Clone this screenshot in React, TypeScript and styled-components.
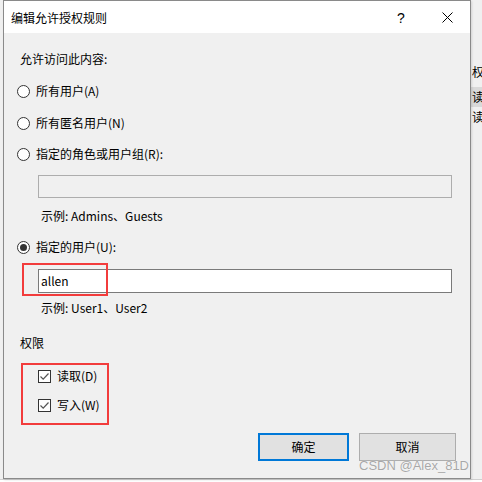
import styled, { createGlobalStyle } from "styled-components";

const GlobalStyle = createGlobalStyle`
  html, body {
    margin: 0;
    padding: 0;
    background: #f0f0f0;
  }
  * {
    box-sizing: border-box;
  }
`;

const Page = styled.div`
  position: relative;
  width: 482px;
  height: 482px;
  overflow: hidden;
  background: #f0f0f0;
  display: flex;
  flex-direction: column;
  font-family: "Noto Sans CJK SC", "Noto Sans", sans-serif;
  font-size: 12px;
  color: #000;
`;

const BehindText = styled.div<{ $top: number; $shade?: boolean }>`
  position: absolute;
  left: 471px;
  top: ${(p) => p.$top}px;
  width: 20px;
  height: 20px;
  line-height: 20px;
  padding-left: 1px;
  font-size: 12px;
  background: ${(p) => (p.$shade ? "#d9d9d9" : "transparent")};
  white-space: nowrap;
`;

const BottomStrip = styled.div`
  height: 3px;
  background: #ffffff;
  border-top: 1px solid #d0d0d0;
`;

const Dialog = styled.div`
  position: relative;
  z-index: 1;
  margin-left: 3px;
  width: 468px;
  height: 479px;
  flex-shrink: 0;
  border: 1px solid #8a8a8a;
  background: #f0f0f0;
  display: flex;
  flex-direction: column;
  box-shadow: 1px 1px 2px rgba(0, 0, 0, 0.12);
`;

const TitleBar = styled.div`
  height: 32px;
  background: #ffffff;
  display: flex;
  align-items: center;
  padding-top: 1px;
`;

const Title = styled.div`
  padding-left: 7px;
  line-height: 20px;
  font-size: 12px;
  flex: 1;
`;

const CaptionButton = styled.div`
  width: 46px;
  height: 31px;
  display: flex;
  align-items: center;
  justify-content: center;
  font-family: "Liberation Sans", "DejaVu Sans", sans-serif;
  font-size: 14px;
`;

const Body = styled.div`
  display: flex;
  flex-direction: column;
  padding-top: 16px;
`;

const Row = styled.div<{ $mt: number; $indent: number }>`
  display: flex;
  align-items: center;
  height: 20px;
  margin-top: ${(p) => p.$mt}px;
  padding-left: ${(p) => p.$indent}px;
  line-height: 20px;
  white-space: nowrap;
`;

const Radio = styled.span<{ $checked?: boolean }>`
  width: 13px;
  height: 13px;
  border-radius: 50%;
  border: 1px solid #333333;
  background: #ffffff;
  margin-right: 6px;
  display: flex;
  align-items: center;
  justify-content: center;

  &::after {
    content: "";
    display: ${(p) => (p.$checked ? "block" : "none")};
    width: 7px;
    height: 7px;
    border-radius: 50%;
    background: #333333;
  }
`;

const Checkbox = styled.span`
  width: 13px;
  height: 13px;
  border: 1px solid #333333;
  background: #ffffff;
  margin-right: 6px;
  display: flex;
  align-items: center;
  justify-content: center;
`;

const TextBox = styled.div<{ $mt: number; $h: number; $disabled?: boolean }>`
  margin-top: ${(p) => p.$mt}px;
  margin-left: 34px;
  width: 414px;
  height: ${(p) => p.$h}px;
  border: 1px solid ${(p) => (p.$disabled ? "#adadad" : "#7a7a7a")};
  background: ${(p) => (p.$disabled ? "#f0f0f0" : "#ffffff")};
  display: flex;
  align-items: center;
  padding-left: 2px;
  line-height: 20px;
`;

const ButtonBar = styled.div`
  display: flex;
  justify-content: flex-end;
  gap: 10px;
  margin-top: 18px;
  padding-right: 14px;
`;

const Button = styled.div<{ $primary?: boolean; $w: number }>`
  width: ${(p) => p.$w}px;
  height: 28px;
  background: #e1e1e1;
  border: ${(p) => (p.$primary ? "2px solid #0078d7" : "1px solid #adadad")};
  display: flex;
  align-items: center;
  justify-content: center;
  line-height: 20px;
`;

const Annotation = styled.div<{ $x: number; $y: number; $w: number; $h: number }>`
  position: absolute;
  z-index: 2;
  left: ${(p) => p.$x}px;
  top: ${(p) => p.$y}px;
  width: ${(p) => p.$w}px;
  height: ${(p) => p.$h}px;
  border: 2px solid #f23c3c;
`;

const Watermark = styled.div`
  position: absolute;
  z-index: 3;
  left: 359px;
  top: 457px;
  font-family: "Liberation Sans", Arial, sans-serif;
  font-size: 13px;
  line-height: 18px;
  color: rgba(140, 140, 140, 0.75);
  text-shadow: 0 0 1px rgba(255, 255, 255, 0.9);
  white-space: nowrap;
`;

function CheckMark() {
  return (
    <svg width="11" height="11" viewBox="0 0 11 11">
      <path d="M1.5 5.5 L4.2 8.2 L9.5 2.5" fill="none" stroke="#555" strokeWidth="1.2" />
    </svg>
  );
}

function CloseGlyph() {
  return (
    <svg width="11" height="11" viewBox="0 0 11 11">
      <path d="M0.5 0.5 L10.5 10.5 M10.5 0.5 L0.5 10.5" stroke="#000" strokeWidth="1" />
    </svg>
  );
}

export default function App() {
  return (
    <>
      <GlobalStyle />
      <Page>
        <BehindText $top={62}>权限</BehindText>
        <BehindText $top={87} $shade>读</BehindText>
        <BehindText $top={107}>读</BehindText>

        <Dialog>
          <TitleBar>
            <Title>编辑允许授权规则</Title>
            <CaptionButton>?</CaptionButton>
            <CaptionButton>
              <CloseGlyph />
            </CaptionButton>
          </TitleBar>

          <Body>
            <Row $mt={0} $indent={16}>允许访问此内容:</Row>
            <Row $mt={12} $indent={13}>
              <Radio />
              所有用户(A)
            </Row>
            <Row $mt={12} $indent={13}>
              <Radio />
              所有匿名用户(N)
            </Row>
            <Row $mt={11} $indent={13}>
              <Radio />
              指定的角色或用户组(R):
            </Row>
            <TextBox $mt={11} $h={23} $disabled />
            <Row $mt={8} $indent={37}>示例: Admins、Guests</Row>
            <Row $mt={11} $indent={13}>
              <Radio $checked />
              指定的用户(U):
            </Row>
            <TextBox $mt={12} $h={24}>allen</TextBox>
            <Row $mt={5} $indent={37}>示例: User1、User2</Row>
            <Row $mt={15} $indent={16}>权限</Row>
            <Row $mt={13} $indent={34}>
              <Checkbox>
                <CheckMark />
              </Checkbox>
              读取(D)
            </Row>
            <Row $mt={9} $indent={34}>
              <Checkbox>
                <CheckMark />
              </Checkbox>
              写入(W)
            </Row>
            <ButtonBar>
              <Button $primary $w={91}>确定</Button>
              <Button $w={97}>取消</Button>
            </ButtonBar>
          </Body>
        </Dialog>
        <BottomStrip />

        <Annotation $x={22} $y={263} $w={86} $h={33} />
        <Annotation $x={21} $y={363} $w={88} $h={62} />
        <Watermark>CSDN @Alex_81D</Watermark>
      </Page>
    </>
  );
}
